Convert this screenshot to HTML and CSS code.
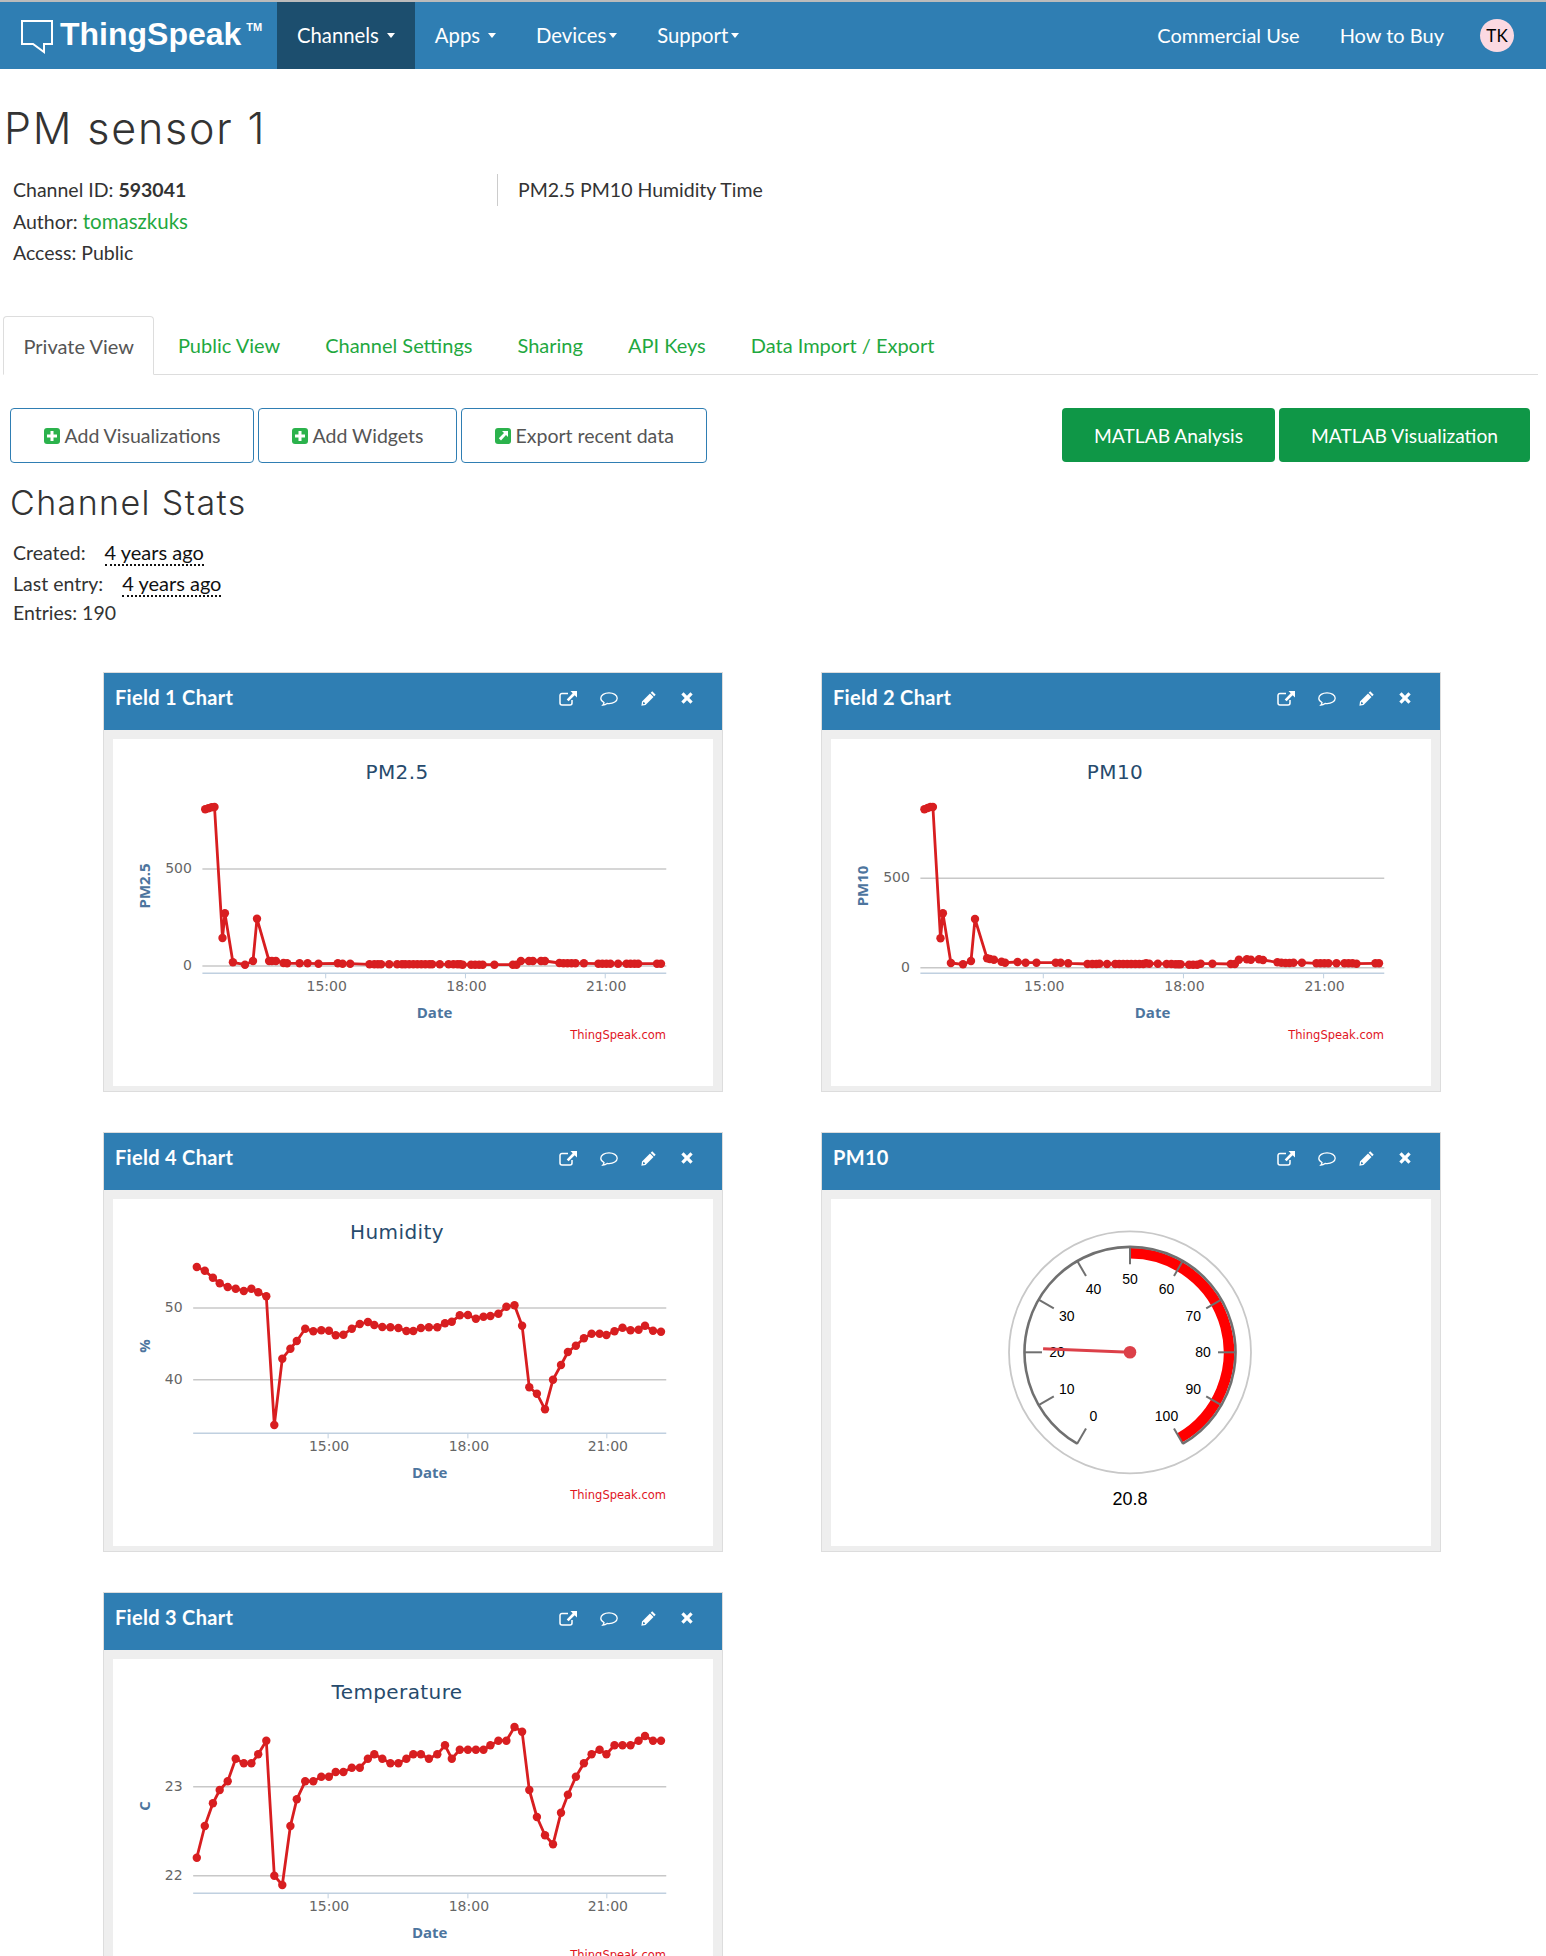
FILE: index.html
```html
<!DOCTYPE html>
<html lang="en">
<head>
  <meta charset="UTF-8">
  <title>PM sensor 1 - ThingSpeak</title>
  <link rel="stylesheet" href="styles.css">
</head>
<body>
  <svg class="sprite" width="0" height="0">
    <symbol id="i-ext" viewBox="0 0 18 15">
      <path d="M9 2.500H3A2 2 0 0 0 1 4.500V12A2 2 0 0 0 3 14H11A2 2 0 0 0 13 12V9" fill="none" stroke="#fff" stroke-width="1.500"/>
      <path d="M11.500 0H18V6.500L15.700 4.300L9.600 10.300L7.700 8.400L13.700 2.300Z" fill="#fff"/>
    </symbol>
    <symbol id="i-comment" viewBox="0 0 18 14">
      <path d="M9 .8C4.500 .8 .8 3.200 .8 6.200C.8 8 2.100 9.500 4 10.500C4 11.500 3.500 12.400 2.800 13.200C4.600 13 6 12.300 7.100 11.400C7.700 11.500 8.300 11.600 9 11.600C13.500 11.600 17.200 9.200 17.200 6.200C17.200 3.200 13.500 .8 9 .8Z" fill="none" stroke="#fff" stroke-width="1.300"/>
    </symbol>
    <symbol id="i-pencil" viewBox="0 0 15 15">
      <path d="M11.200 .3L14.700 3.800L13.200 5.300L9.700 1.800ZM9 2.500L12.500 6L4.500 14L.4 14.800L1 10.500ZM2.300 10.800L1.900 13.200L4.200 12.700L3.500 11.500Z" fill="#fff" fill-rule="evenodd"/>
    </symbol>
    <symbol id="i-close" viewBox="0 0 12 12">
      <path d="M2.600 .3L6 3.700L9.400 .3L11.700 2.600L8.300 6L11.700 9.400L9.400 11.700L6 8.300L2.600 11.700L.3 9.400L3.700 6L.3 2.600Z" fill="#fff"/>
    </symbol>
    <symbol id="i-plus" viewBox="0 0 16 16">
      <rect width="16" height="16" rx="3" fill="#2bb24c"/>
      <path d="M6.500 3H9.500V6.500H13V9.500H9.500V13H6.500V9.500H3V6.500H6.500Z" fill="#fff"/>
    </symbol>
    <symbol id="i-export" viewBox="0 0 16 16">
      <rect width="16" height="16" rx="3" fill="#2bb24c"/>
      <path d="M7 3H13V9L11 7L6 12.500L3.800 10.300L9 5Z" fill="#fff"/>
    </symbol>
  </svg>

  <div class="page">
    <nav class="navbar">
      <a class="brand">
        <svg class="brand-bubble" width="36" height="36" viewBox="0 0 36 36">
          <path d="M2 2H32V25H24V33L13 25H2Z" fill="none" stroke="#fff" stroke-width="2"/>
        </svg>
        <span class="brand-name">ThingSpeak</span><span class="brand-tm">TM</span>
      </a>
      <a class="nav-item active">Channels<i class="caret"></i></a>
      <a class="nav-item">Apps<i class="caret"></i></a>
      <a class="nav-item">Devices<i class="caret tight"></i></a>
      <a class="nav-item">Support<i class="caret tight"></i></a>
      <div class="nav-right">
        <a class="nav-item">Commercial Use</a>
        <a class="nav-item">How to Buy</a>
        <span class="avatar">TK</span>
      </div>
    </nav>

    <h1>PM sensor 1</h1>

    <div class="meta">
      <ul class="meta-list">
        <li>Channel ID: <strong>593041</strong></li>
        <li>Author: <a class="green">tomaszkuks</a></li>
        <li>Access: Public</li>
      </ul>
      <div class="meta-desc">PM2.5 PM10 Humidity Time</div>
    </div>

    <ul class="tabs">
      <li class="tab active">Private View</li>
      <li class="tab">Public View</li>
      <li class="tab">Channel Settings</li>
      <li class="tab">Sharing</li>
      <li class="tab">API Keys</li>
      <li class="tab">Data Import / Export</li>
    </ul>

    <div class="toolbar">
      <a class="btn btn-outline"><svg class="btn-icon"><use href="#i-plus"/></svg>Add Visualizations</a>
      <a class="btn btn-outline"><svg class="btn-icon"><use href="#i-plus"/></svg>Add Widgets</a>
      <a class="btn btn-outline"><svg class="btn-icon"><use href="#i-export"/></svg>Export recent data</a>
      <a class="btn btn-green first-green">MATLAB Analysis</a>
      <a class="btn btn-green">MATLAB Visualization</a>
    </div>

    <h2>Channel Stats</h2>
    <ul class="stats">
      <li>Created: <abbr>4 years ago</abbr></li>
      <li>Last entry: <abbr>4 years ago</abbr></li>
      <li>Entries: 190</li>
    </ul>

    <div class="cards">
      <section class="card">
        <header class="card-head">
          <span class="card-title">Field 1 Chart</span>
          <div class="card-tools">
            <svg class="tool tool-ext"><use href="#i-ext"/></svg>
            <svg class="tool tool-comment"><use href="#i-comment"/></svg>
            <svg class="tool tool-pencil"><use href="#i-pencil"/></svg>
            <svg class="tool tool-close"><use href="#i-close"/></svg>
          </div>
        </header>
        <div class="card-body"><svg class="plot" id="chart-pm25" viewBox="0 0 600 347"></svg></div>
      </section>

      <section class="card">
        <header class="card-head">
          <span class="card-title">Field 2 Chart</span>
          <div class="card-tools">
            <svg class="tool tool-ext"><use href="#i-ext"/></svg>
            <svg class="tool tool-comment"><use href="#i-comment"/></svg>
            <svg class="tool tool-pencil"><use href="#i-pencil"/></svg>
            <svg class="tool tool-close"><use href="#i-close"/></svg>
          </div>
        </header>
        <div class="card-body"><svg class="plot" id="chart-pm10" viewBox="0 0 600 347"></svg></div>
      </section>

      <section class="card">
        <header class="card-head">
          <span class="card-title">Field 4 Chart</span>
          <div class="card-tools">
            <svg class="tool tool-ext"><use href="#i-ext"/></svg>
            <svg class="tool tool-comment"><use href="#i-comment"/></svg>
            <svg class="tool tool-pencil"><use href="#i-pencil"/></svg>
            <svg class="tool tool-close"><use href="#i-close"/></svg>
          </div>
        </header>
        <div class="card-body"><svg class="plot" id="chart-humidity" viewBox="0 0 600 347"></svg></div>
      </section>

      <section class="card">
        <header class="card-head">
          <span class="card-title">PM10</span>
          <div class="card-tools">
            <svg class="tool tool-ext"><use href="#i-ext"/></svg>
            <svg class="tool tool-comment"><use href="#i-comment"/></svg>
            <svg class="tool tool-pencil"><use href="#i-pencil"/></svg>
            <svg class="tool tool-close"><use href="#i-close"/></svg>
          </div>
        </header>
        <div class="card-body"><svg class="plot" id="gauge-pm10" viewBox="0 0 600 347"></svg></div>
      </section>

      <section class="card">
        <header class="card-head">
          <span class="card-title">Field 3 Chart</span>
          <div class="card-tools">
            <svg class="tool tool-ext"><use href="#i-ext"/></svg>
            <svg class="tool tool-comment"><use href="#i-comment"/></svg>
            <svg class="tool tool-pencil"><use href="#i-pencil"/></svg>
            <svg class="tool tool-close"><use href="#i-close"/></svg>
          </div>
        </header>
        <div class="card-body"><svg class="plot" id="chart-temp" viewBox="0 0 600 347"></svg></div>
      </section>
    </div>
  </div>

  <script src="charts.js"></script>
</body>
</html>
```

FILE: styles.css
```css
:root {
  --blue: #2f7eb3;
  --blue-dark: #1c4e6e;
  --green: #1fa83f;
  --text: #333;
}

* {
  box-sizing: border-box;
}

html, body {
  margin: 0;
  padding: 0;
  background: #fff;
}

body {
  font-family: "Lato", sans-serif;
  font-size: 19.500px;
  color: var(--text);
}

ul {
  list-style: none;
  margin: 0;
  padding: 0;
}

.sprite {
  position: absolute;
}

.page {
  height: 1956px;
  overflow: hidden;
}

/* navbar */
.navbar {
  display: flex;
  height: 69px;
  background: var(--blue);
  border-top: 2px solid #bbb;
  color: #fff;
}

.brand {
  display: flex;
  width: 277px;
  padding-left: 20px;
}

.brand-bubble {
  margin-top: 17px;
}

.brand-name {
  margin-left: 4px;
  margin-top: 7px;
  font-family: "Liberation Sans", sans-serif;
  font-weight: bold;
  font-size: 32px;
  line-height: 50px;
}

.brand-tm {
  margin-left: 5px;
  margin-top: 19px;
  font-family: "Liberation Sans", sans-serif;
  font-size: 11px;
  font-weight: bold;
  line-height: 12px;
}

.nav-item {
  display: flex;
  align-items: center;
  padding: 0 20px 2px;
  font-size: 20.300px;
}

.nav-item.active {
  background: var(--blue-dark);
}

.caret {
  width: 0;
  height: 0;
  margin-left: 8px;
  margin-top: 2px;
  border-top: 5px solid #fff;
  border-left: 4.500px solid transparent;
  border-right: 4.500px solid transparent;
}

.caret.tight {
  margin-left: 3px;
}

.nav-right {
  display: flex;
  align-items: center;
  height: 100%;
  margin-left: auto;
  padding-right: 32px;
}

.nav-right .nav-item {
  height: 100%;
  font-size: 20px;
}

.avatar {
  display: flex;
  align-items: center;
  justify-content: center;
  width: 34px;
  height: 33px;
  margin-left: 16px;
  border-radius: 50%;
  background: #fbd9e2;
  color: #000;
  font-size: 17px;
}

/* heading + info */
h1 {
  margin: 34px 0 21px 4px;
  font-family: "Inter", sans-serif;
  font-weight: 300;
  font-size: 43px;
  letter-spacing: 1.800px;
  line-height: 50px;
}

.meta {
  display: flex;
  height: 95px;
}

.meta-list {
  width: 497px;
  padding-left: 13px;
  line-height: 31.500px;
}

.meta-list li {
  height: 31.500px;
}

.meta-desc {
  height: 32px;
  padding-left: 20px;
  border-left: 1px solid #ccc;
  line-height: 32px;
}

.green {
  color: var(--green);
  font-size: 20.500px;
}

/* tabs */
.tabs {
  display: flex;
  height: 59px;
  margin: 47px 8px 0 3px;
  border-bottom: 1px solid #ddd;
  font-size: 20px;
}

.tab {
  display: flex;
  align-items: center;
  padding: 0 22.500px;
  color: var(--green);
}

.tab.active {
  margin-bottom: -1px;
  margin-right: 1px;
  padding: 0 19.500px;
  background: #fff;
  border: 1px solid #ddd;
  border-bottom-color: #fff;
  border-radius: 4px 4px 0 0;
  color: #555;
}

/* buttons */
.toolbar {
  display: flex;
  gap: 4px;
  margin-top: 33px;
  padding: 0 16px 0 10px;
}

.btn {
  display: flex;
  align-items: center;
  justify-content: center;
  height: 55px;
  border-radius: 4px;
  font-size: 19.500px;
}

.btn-outline {
  padding: 0 32.500px;
  border: 1px solid var(--blue);
  color: #555;
}

.btn-icon {
  width: 16px;
  height: 16px;
  margin-right: 5px;
}

.btn-green {
  height: 54px;
  padding: 0 32px;
  background: #0f9747;
  color: #fff;
  font-size: 19.200px;
}

.first-green {
  margin-left: auto;
}

/* stats */
h2 {
  margin: 20px 0 14px 10px;
  font-family: "Inter", sans-serif;
  font-weight: 300;
  font-size: 34px;
  letter-spacing: 1.400px;
  line-height: 40px;
}

.stats {
  padding-left: 13px;
  line-height: 30.500px;
}

.stats li {
  height: 30.500px;
}

abbr {
  margin-left: 14px;
  color: #111;
  font-size: 20px;
  border-bottom: 2px dotted #111;
}

/* panels */
.cards {
  display: grid;
  grid-template-columns: 620px 620px;
  column-gap: 98px;
  row-gap: 40px;
  margin: 43px 0 0 103px;
}

.card {
  height: 420px;
  border: 1px solid #ddd;
  background: #eee;
}

.card-head {
  display: flex;
  height: 57px;
  padding: 12px 29px 0 11px;
  background: var(--blue);
  color: #fff;
}

.card-title {
  font-size: 20px;
  font-weight: 700;
  letter-spacing: 0.300px;
  line-height: 24px;
}

.card-tools {
  display: flex;
  align-items: center;
  gap: 23px;
  height: 27px;
  margin-left: auto;
}

.tool-ext {
  width: 18px;
  height: 15px;
}

.tool-comment {
  width: 18px;
  height: 14px;
  margin-top: 2px;
}

.tool-pencil {
  width: 15px;
  height: 15px;
}

.tool-close {
  width: 12px;
  height: 12px;
  margin-left: 2px;
}

.card-body {
  width: 600px;
  height: 347px;
  margin: 9px;
  background: #fff;
}

.plot {
  display: block;
  width: 600px;
  height: 347px;
}

/* chart text */
.plot text {
  font-family: "DejaVu Sans", sans-serif;
}

.plot-title {
  font-size: 20px;
  letter-spacing: 0.400px;
  fill: #274b6d;
  text-anchor: middle;
}

.plot-tick {
  font-size: 14px;
  fill: #666;
}

.plot .plot-axis-title {
  font-family: "Open Sans", sans-serif;
  font-size: 15px;
  font-weight: 700;
  fill: #4d759e;
  text-anchor: middle;
}

.plot-credit {
  font-size: 11.500px;
  fill: #e0141e;
  text-anchor: end;
}

.plot .gauge-label {
  font-family: "Liberation Sans", sans-serif;
  font-size: 14px;
  fill: #000;
  text-anchor: middle;
  dominant-baseline: central;
}

.plot .gauge-value {
  font-family: "Liberation Sans", sans-serif;
  font-size: 18px;
  fill: #000;
  text-anchor: middle;
  dominant-baseline: central;
}
```

FILE: charts.js
```js
const SX = 1 / 2.49;
const SY = 1 / 3;

function px(x, y, off) {
  return [(x * SX - off).toFixed(1), (y * SY - 69).toFixed(1)];
}

function drawChart(id, cfg) {
  const svg = document.getElementById(id);
  const off = cfg.off || 13;
  const x0 = cfg.axisStart * SX - off;
  const x1 = cfg.axisEnd * SX - off;
  const axisY = 910 * SY - 69;
  let html = `<text class="plot-title" x="284" y="40">${cfg.title}</text>`;

  cfg.grid.forEach(([label, y]) => {
    const gy = y * SY - 69;
    html += `<line x1="${x0}" x2="${x1}" y1="${gy}" y2="${gy}" stroke="#c8c8c8" stroke-width="1.500"/>`;
    html += `<text class="plot-tick" x="${x0 - 10.5}" y="${gy + 4}" text-anchor="end">${label}</text>`;
  });

  html += `<line x1="${x0}" x2="${x1}" y1="${axisY}" y2="${axisY}" stroke="#c0d0e0" stroke-width="1.500"/>`;
  cfg.ticks.forEach((t, i) => {
    const tx = t * SX - off;
    html += `<line x1="${tx}" x2="${tx}" y1="${axisY}" y2="${axisY + 5}" stroke="#c0d0e0"/>`;
    html += `<text class="plot-tick" x="${tx + 1}" y="252" text-anchor="middle">${['15:00', '18:00', '21:00'][i]}</text>`;
  });

  html += `<text class="plot-axis-title" transform="translate(37 147) rotate(-90)">${cfg.yTitle}</text>`;
  html += `<text class="plot-axis-title" x="${cfg.dateX * SX - off}" y="279">Date</text>`;
  html += `<text class="plot-credit" x="553" y="300">ThingSpeak.com</text>`;

  const pts = cfg.data.map(([x, y]) => px(x, y, off));
  html += `<polyline points="${pts.map(p => p.join(',')).join(' ')}" fill="none" stroke="#d81e20" stroke-width="2.800" stroke-linejoin="round"/>`;
  pts.forEach(([x, y]) => {
    html += `<circle cx="${x}" cy="${y}" r="4.200" fill="#d81e20"/>`;
  });

  svg.innerHTML = html;
}

function drawGauge(id, value) {
  const svg = document.getElementById(id);
  const cx = 299;
  const cy = 153.3;
  const polar = (deg, r) => {
    const a = (deg - 90) * Math.PI / 180;
    return [(cx + r * Math.cos(a)).toFixed(1), (cy + r * Math.sin(a)).toFixed(1)];
  };
  const arc = (from, to, r) => {
    const [ax, ay] = polar(from, r);
    const [bx, by] = polar(to, r);
    const large = to - from > 180 ? 1 : 0;
    return `M${ax} ${ay}A${r} ${r} 0 ${large} 1 ${bx} ${by}`;
  };

  let html = `<circle cx="${cx}" cy="${cy}" r="121" fill="none" stroke="#c8c8c8" stroke-width="1.800"/>`;
  html += `<path d="${arc(0, 150, 99)}" fill="none" stroke="#f00" stroke-width="10.500"/>`;
  html += `<path d="${arc(-150, 150, 105.5)}" fill="none" stroke="#707070" stroke-width="2.600"/>`;

  for (let v = 0; v <= 100; v += 10) {
    const deg = -150 + v * 3;
    const [x1, y1] = polar(deg, 106);
    const [x2, y2] = polar(deg, 88);
    const [lx, ly] = polar(deg, 73);
    html += `<line x1="${x1}" y1="${y1}" x2="${x2}" y2="${y2}" stroke="#707070" stroke-width="2"/>`;
    html += `<text class="gauge-label" x="${lx}" y="${ly}">${v}</text>`;
  }

  const [nx, ny] = polar(-150 + value * 3, 87);
  html += `<line x1="${cx}" y1="${cy}" x2="${nx}" y2="${ny}" stroke="#dc4049" stroke-width="3"/>`;
  html += `<circle cx="${cx}" cy="${cy}" r="6.300" fill="#dc4049"/>`;
  html += `<text class="gauge-value" x="${cx}" y="300">${value}</text>`;
  svg.innerHTML = html;
}

drawChart('chart-pm25', {
  title: 'PM2.5', yTitle: 'PM2.5', axisStart: 255, axisEnd: 1410, dateX: 833,
  grid: [['500', 597], ['0', 888]],
  ticks: [562, 910, 1258],
  data: [[262,418],[270,415],[278,412],[285,411],[305,804],[311,730],[331,877],[361,884],[381,873],[391,746],[421,873],[428,873],[438,873],[457,879],[466,880],[497,880],[517,880],[544,881],[592,880],[604,881],[623,881],[671,883],[683,883],[692,883],[700,883],[720,883],[740,883],[752,883],[760,883],[770,883],[780,883],[790,883],[800,883],[810,883],[820,883],[827,883],[846,883],[868,883],[880,883],[890,883],[897,883],[903,884],[924,884],[934,884],[944,884],[953,884],[982,884],[1028,884],[1037,884],[1048,873],[1068,873],[1078,873],[1098,873],[1108,873],[1144,879],[1154,880],[1164,880],[1174,880],[1184,880],[1205,880],[1241,881],[1251,881],[1261,881],[1271,881],[1290,881],[1311,881],[1321,881],[1331,881],[1340,881],[1387,881],[1397,881]]
});

drawChart('chart-pm10', {
  off: 11, title: 'PM10', yTitle: 'PM10', axisStart: 250, axisEnd: 1405, dateX: 828,
  grid: [['500', 625], ['0', 893]],
  ticks: [556, 905, 1254],
  data: [[260,418],[268,414],[275,411],[281,411],[300,805],[306,730],[326,879],[356,883],[376,873],[386,747],[416,865],[423,867],[433,869],[452,875],[461,878],[492,876],[512,878],[539,878],[587,878],[599,878],[618,880],[666,882],[678,882],[688,882],[696,881],[715,882],[735,882],[745,882],[755,882],[765,882],[775,882],[785,882],[795,882],[805,882],[812,880],[820,881],[841,881],[863,882],[875,882],[885,883],[892,883],[898,883],[919,884],[929,884],[939,884],[948,881],[977,881],[1023,882],[1033,882],[1043,869],[1063,868],[1073,869],[1093,868],[1103,870],[1139,877],[1149,878],[1159,879],[1169,879],[1179,878],[1200,878],[1236,880],[1246,880],[1256,880],[1266,880],[1286,880],[1306,880],[1316,880],[1326,880],[1336,881],[1383,880],[1392,880]]
});

drawChart('chart-humidity', {
  title: 'Humidity', yTitle: '%', axisStart: 232, axisEnd: 1410, dateX: 821,
  grid: [['50', 534], ['40', 749]],
  ticks: [568, 916, 1262],
  data: [[241,411],[261,422],[281,443],[298,460],[318,471],[338,476],[358,483],[377,476],[394,487],[414,499],[434,885],[454,686],[474,656],[490,633],[511,596],[531,604],[551,601],[570,602],[587,616],[606,614],[627,596],[647,582],[667,576],[683,585],[703,591],[723,592],[743,594],[763,603],[780,603],[799,594],[819,592],[840,592],[859,580],[876,575],[896,556],[916,555],[936,566],[955,560],[972,558],[992,551],[1012,530],[1032,526],[1051,587],[1069,772],[1088,791],[1108,838],[1128,749],[1148,705],[1165,666],[1185,647],[1205,625],[1224,611],[1244,611],[1261,615],[1281,604],[1301,593],[1321,601],[1341,599],[1357,587],[1377,602],[1397,605]]
});

drawChart('chart-temp', {
  title: 'Temperature', yTitle: 'C', axisStart: 232, axisEnd: 1410, dateX: 821,
  grid: [['23', 590], ['22', 857]],
  ticks: [568, 916, 1262],
  data: [[241,803],[261,708],[281,640],[298,600],[318,574],[338,506],[358,520],[377,520],[394,493],[414,452],[434,857],[454,885],[474,708],[490,628],[511,574],[531,574],[551,560],[570,560],[587,546],[606,546],[627,533],[647,533],[667,506],[683,493],[703,506],[723,520],[743,520],[763,506],[780,493],[799,493],[819,506],[840,493],[859,466],[876,506],[896,479],[916,479],[936,479],[955,479],[972,466],[992,452],[1012,452],[1032,411],[1051,425],[1069,600],[1088,681],[1108,736],[1128,763],[1148,668],[1165,614],[1185,560],[1205,520],[1224,493],[1244,479],[1261,493],[1281,466],[1301,466],[1321,466],[1341,452],[1357,438],[1377,452],[1397,452]]
});

drawGauge('gauge-pm10', 20.8);
```
